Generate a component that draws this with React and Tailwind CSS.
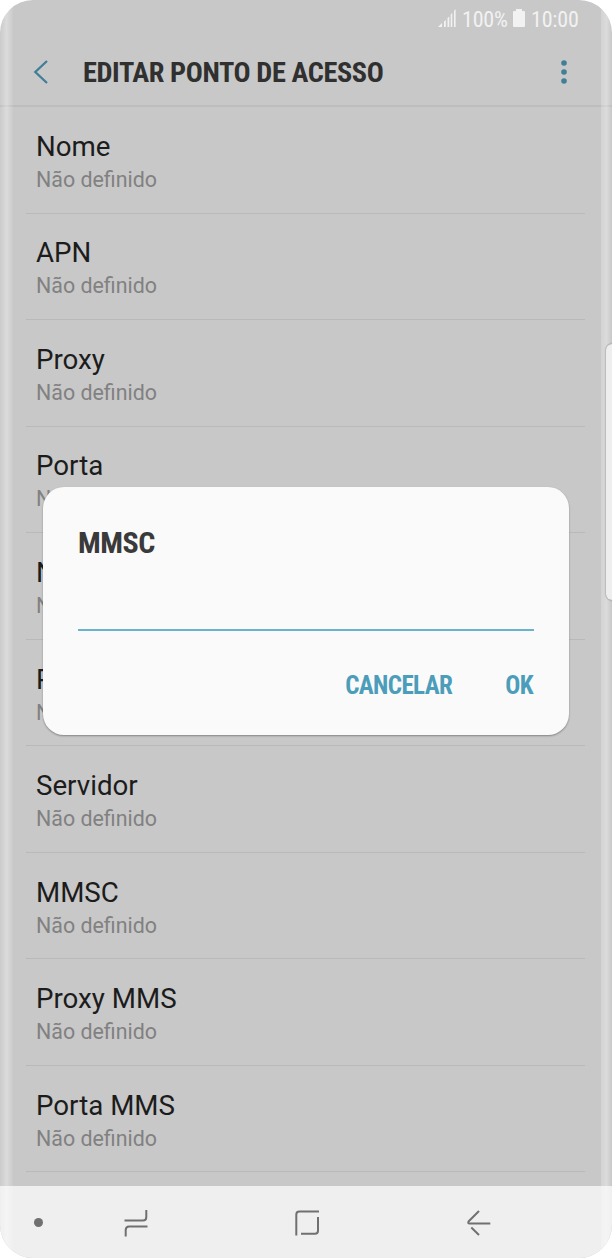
import React from "react";

const settings = [
  "Nome",
  "APN",
  "Proxy",
  "Porta",
  "Nome",
  "Palavra-passe",
  "Servidor",
  "MMSC",
  "Proxy MMS",
  "Porta MMS",
];

const StatusBar = () => (
  <div className="flex h-[38px] items-center justify-end pr-[33px] text-[#f2f2f2]">
    <svg className="mr-[6px] mb-[2px] h-[18px] w-[18px]" viewBox="0 0 18 18" fill="currentColor">
      <path d="M0 18L4 14V18Z" />
      <path d="M6 12.5L7.8 11V18H6Z" />
      <path d="M9.5 9L11.3 7.5V18H9.5Z" />
      <path d="M12.7 5.5L14.3 4V18H12.7Z" />
      <path d="M16 2L17.6 0V18H16Z" />
    </svg>
    <span className="w-[46px] pt-px whitespace-nowrap text-[22px] leading-none font-normal tracking-[-0.2px] [font-stretch:75%]">100%</span>
    <svg className="mr-[6px] mb-[2px] ml-[5px] h-[18px] w-[12px]" viewBox="0 0 12 18" fill="currentColor">
      <path d="M3 0H9V2H11Q12 2 12 3V17Q12 18 11 18H1Q0 18 0 17V3Q0 2 1 2H3Z" />
    </svg>
    <span className="w-[48px] pt-px whitespace-nowrap text-[22px] leading-none font-normal tracking-[-0.2px] [font-stretch:75%]">10:00</span>
  </div>
);

const Header = () => (
  <header className="flex h-[69px] items-center border-b-2 border-[#bdbdbd] pr-[44px] pl-[33px]">
    <svg className="h-[24px] w-[16px]" viewBox="0 0 16 24" fill="none" stroke="#417f98" strokeWidth="2.3">
      <path d="M14 1L2.3 12L14 23" />
    </svg>
    <h1 className="ml-[34px] flex-1 pt-[4px] text-[28.3px] leading-none font-bold tracking-[-0.4px] whitespace-nowrap text-[#303030] [font-stretch:75%]">
      EDITAR PONTO DE ACESSO
    </h1>
    <svg className="h-[24px] w-[8px]" viewBox="0 0 8 24" fill="#417f98">
      <circle cx="4" cy="3" r="2.8" />
      <circle cx="4" cy="12" r="2.8" />
      <circle cx="4" cy="21" r="2.8" />
    </svg>
  </header>
);

const SettingRow = ({ title }) => (
  <div className="mr-[27px] ml-[26px] flex h-[106.55px] flex-col border-b border-[#b9b9b9] pt-[22.8px] pl-[10px]">
    <span className="text-[27.7px] leading-[34px] text-[#1c1c1c]">{title}</span>
    <span className="text-[21.4px] leading-[32px] text-[#818181]">Não definido</span>
  </div>
);

const Dialog = () => (
  <div className="absolute top-[487px] left-[43px] flex h-[248px] w-[526px] flex-col rounded-[21px] bg-[#fafafa] px-[35px] shadow-[0_1px_2px_rgba(0,0,0,0.35)]">
    <h2 className="pt-[40px] text-[30px] leading-[32px] font-bold tracking-[-0.5px] text-[#3a3a3a] [font-stretch:75%]">MMSC</h2>
    <div className="h-[72px] border-b-2 border-[#6db2cb]" />
    <div className="flex justify-end gap-[53px] pt-[40px] pr-px text-[25px] leading-[30px] font-bold tracking-[-0.6px] text-[#4b9dba] [font-stretch:75%]">
      <button>CANCELAR</button>
      <button>OK</button>
    </div>
  </div>
);

const NavigationBar = () => (
  <nav className="flex h-[72px] shrink-0 items-center bg-[#efefef] pt-px pl-[34px]">
    <span className="h-[9px] w-[9px] rounded-full bg-[#707070]" />
    <svg className="ml-[81px] h-[28px] w-[24px]" viewBox="0 0 24 28" fill="none" stroke="#707070" strokeWidth="2">
      <path d="M.5 11.5H19Q22.3 11.5 22.3 8V1" />
      <path d="M23.5 17.5H5Q1.7 17.5 1.7 21V27.5" />
    </svg>
    <svg className="ml-[147px] h-[26px] w-[25px]" viewBox="0 0 25 26" fill="none" stroke="#707070" strokeWidth="2">
      <path d="M1.3 25.5V4.5Q1.3 1.5 4.3 1.5H24" />
      <path d="M6 23.7H20Q23 23.7 23 20.7V7" />
    </svg>
    <svg className="ml-[147px] h-[26px] w-[24px]" viewBox="0 0 24 26" fill="none" stroke="#707070" strokeWidth="2" strokeLinejoin="round">
      <path d="M12 1L1.5 11.5Q.7 13.5 2.5 13.5H23.3" />
      <path d="M4.3 17.5L12 25" />
    </svg>
  </nav>
);

// light reflections and handle along the curved glass
const ScreenEdges = () => (
  <>
    <div className="pointer-events-none absolute inset-y-0 left-0 w-[13px] bg-linear-to-r from-white/5 via-white/35 to-white/5" />
    <div className="pointer-events-none absolute inset-y-0 right-0 w-[11px] bg-linear-to-r from-white/20 via-white/35 to-transparent" />
    <div className="absolute top-[344px] right-[-6px] h-[256px] w-[12px] rounded-[7px] bg-[#eeeeee] shadow-[0_0_2px_rgba(0,0,0,0.5)]" />
  </>
);

const App = () => {
  return (
    <div className="h-[1258px] w-[612px] bg-white font-['Roboto',sans-serif]">
      <div className="relative flex h-full flex-col overflow-hidden rounded-[33px] bg-[#c8c8c8]">
        <StatusBar />
        <Header />
        <main className="min-h-0 flex-1 overflow-hidden">
          {settings.map((title, index) => (
            <SettingRow key={index} title={title} />
          ))}
        </main>
        <NavigationBar />
        <ScreenEdges />
        <Dialog />
      </div>
    </div>
  );
};

export default App;
